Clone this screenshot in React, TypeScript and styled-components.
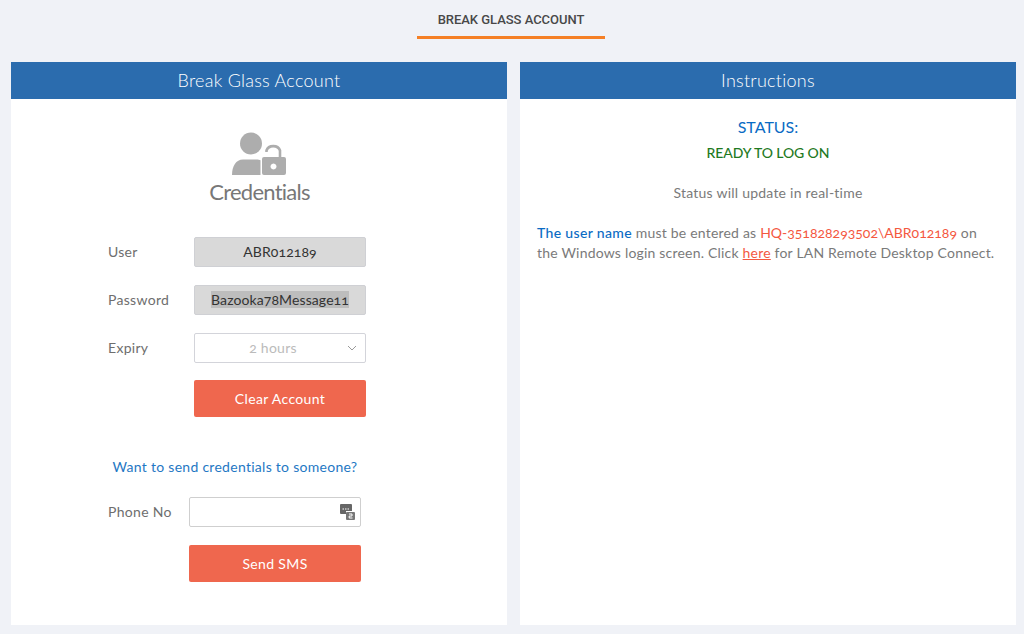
import React from "react";
import styled, { createGlobalStyle } from "styled-components";

const Global = createGlobalStyle`
  html, body { margin: 0; padding: 0; background: #f0f2f7; }
  body { font-family: "Lato", "Open Sans", sans-serif; color: #666; font-variant-numeric: oldstyle-nums; }
  * { box-sizing: border-box; }
`;

const Page = styled.div`
  width: 1024px;
  height: 634px;
  overflow: hidden;
  display: flex;
  flex-direction: column;
  background: #f0f2f7;
`;

const TabBar = styled.div`
  height: 62px;
  display: flex;
  justify-content: center;
  align-items: flex-start;
  padding-right: 2px;
`;

const Tab = styled.div`
  width: 188px;
  height: 39px;
  border-bottom: 3px solid #f58026;
  text-align: center;
  font: 500 13px/16px "Roboto", sans-serif;
  letter-spacing: -0.03px;
  padding-top: 12px;
  color: #484848;
`;

const Columns = styled.div`
  display: flex;
  gap: 13px;
  padding: 0 8px 9px 11px;
  flex: 1;
`;

const Panel = styled.section`
  width: 496px;
  background: #fff;
  display: flex;
  flex-direction: column;
`;

const PanelHead = styled.h2`
  margin: 0;
  height: 37px;
  background: #2b6cae;
  color: #fff;
  font: 300 18px/37px "Lato", sans-serif;
  text-align: center;
  letter-spacing: 0.25px;
`;

const CredBody = styled.div`
  display: flex;
  flex-direction: column;
  padding: 33px 0 0 97px;
`;

const Logo = styled.div`
  width: 303px;
  display: flex;
  flex-direction: column;
  align-items: center;
  margin-bottom: 33px;
`;

const LogoCaption = styled.div`
  font: 400 22px/24px "Lato", sans-serif;
  letter-spacing: -0.75px;
  color: #777;
  margin-top: 3px;
`;

const Row = styled.div<{ $gap?: number }>`
  display: flex;
  align-items: center;
  height: 30px;
  margin-bottom: ${(p) => p.$gap ?? 18}px;
`;

const Label = styled.label<{ $w?: number }>`
  width: ${(p) => p.$w ?? 86}px;
  flex: none;
  font-size: 14px;
  letter-spacing: 0.3px;
  padding-bottom: 2px;
  color: #6e6e6e;
`;

const ReadOnly = styled.div`
  width: 172px;
  height: 30px;
  background: #d9d9d9;
  border: 1px solid #cfd0d4;
  border-radius: 2px;
  font-size: 14px;
  line-height: 27px;
  letter-spacing: 0.1px;
  text-align: center;
  color: #333;
`;

const Selected = styled.span`
  background: #bdbdbd;
`;

const Select = styled.div`
  position: relative;
  width: 172px;
  height: 30px;
  background: #fff;
  border: 1px solid #d3d4da;
  border-radius: 2px;
  font-size: 14px;
  line-height: 27px;
  letter-spacing: 0.25px;
  text-align: center;
  color: #bbb;
  padding-right: 14px;
`;

const Chevron = styled.svg`
  position: absolute;
  right: 8px;
  top: 11px;
`;

const Button = styled.button<{ $ml: number }>`
  display: block;
  width: 172px;
  height: 37px;
  margin-left: ${(p) => p.$ml}px;
  background: #ef674e;
  border: 0;
  border-radius: 2px;
  color: #fff;
  font: 400 14px "Lato", sans-serif;
  letter-spacing: 0.35px;
`;

const Prompt = styled.div`
  width: 254px;
  text-align: center;
  font-size: 14px;
  line-height: 18px;
  letter-spacing: 0.28px;
  color: #1f78c4;
  margin: 41px 0 21px;
`;

const PhoneBox = styled.div`
  position: relative;
  width: 172px;
  height: 30px;
  background: #fff;
  border: 1px solid #cfcfcf;
  border-radius: 2px;
`;

const PhoneIcon = styled.svg`
  position: absolute;
  right: 4px;
  top: 6px;
`;

const InfoBody = styled.div`
  padding: 18px 17px 0;
  font-size: 14px;
`;

const StatusTitle = styled.div`
  text-align: center;
  font-size: 16px;
  line-height: 20px;
  color: #0a6bc4;
`;

const StatusValue = styled.div`
  text-align: center;
  font-size: 14px;
  line-height: 18px;
  font-weight: 500;
  letter-spacing: -0.1px;
  color: #1f7a1f;
  margin-top: 7px;
`;

const StatusNote = styled.div`
  text-align: center;
  line-height: 18px;
  letter-spacing: 0.23px;
  color: #7a7a7a;
  margin-top: 22px;
`;

const Para = styled.p`
  margin: 21px 0 0;
  line-height: 20px;
  letter-spacing: 0.2px;
  color: #7a7a7a;
  white-space: nowrap;
`;

const Blue = styled.span`
  color: #0a6bc4;
  font-weight: 500;
  letter-spacing: 0.35px;
`;

const Red = styled.span`
  color: #f4583f;
  letter-spacing: 0;
`;

const Here = styled.a`
  color: #f4583f;
  text-decoration: underline;
`;

export default function App() {
  return (
    <Page>
      <Global />
      <TabBar>
        <Tab>BREAK GLASS ACCOUNT</Tab>
      </TabBar>
      <Columns>
        <Panel>
          <PanelHead>Break Glass Account</PanelHead>
          <CredBody>
            <Logo>
              <svg width="56" height="45" viewBox="0 0 56 45" fill="#adadad">
                <circle cx="19" cy="11.500" r="11" />
                <path d="M0 43c0-9 4-15.500 11-15.500h13c2.500 0 3.500 .3 4.500 .8V43z" />
                <path fillRule="evenodd" d="M30 27a2 2 0 0 1 2-2h20a2 2 0 0 1 2 2v14a2 2 0 0 1-2 2H32a2 2 0 0 1-2-2zM41.500 31.500a3 3 0 1 0 .01 0z" />
                <path d="M34.500 20v-1.500a7 6 0 0 1 13.500 0V25" fill="none" stroke="#adadad" strokeWidth="2.600" />
              </svg>
              <LogoCaption>Credentials</LogoCaption>
            </Logo>
            <Row>
              <Label>User</Label>
              <ReadOnly>ABR012189</ReadOnly>
            </Row>
            <Row>
              <Label>Password</Label>
              <ReadOnly>
                <Selected>Bazooka78Message11</Selected>
              </ReadOnly>
            </Row>
            <Row $gap={17}>
              <Label>Expiry</Label>
              <Select>
                2 hours
                <Chevron width="10" height="7" viewBox="0 0 10 7" fill="none" stroke="#9a9a9a" strokeWidth="1">
                  <path d="M1 1l4 4 4-4" />
                </Chevron>
              </Select>
            </Row>
            <Button $ml={86}>Clear Account</Button>
            <Prompt>Want to send credentials to someone?</Prompt>
            <Row $gap={18}>
              <Label $w={81}>Phone No</Label>
              <PhoneBox>
                <PhoneIcon width="16" height="16" viewBox="0 0 16 16">
                  <path d="M1 0h10a1 1 0 0 1 1 1v6H6v3H1a1 1 0 0 1-1-1V1a1 1 0 0 1 1-1z" fill="#666" />
                  <path d="M2.500 5h1.500M5 5h1.500M7.500 5h1.500" stroke="#fff" strokeWidth="1.200" />
                  <rect x="6" y="8" width="9" height="8" rx="1" fill="#777" />
                  <path d="M9 10h3v2H9.200v2H12.500" fill="none" stroke="#fff" strokeWidth="1" />
                </PhoneIcon>
              </PhoneBox>
            </Row>
            <Button $ml={81}>Send SMS</Button>
          </CredBody>
        </Panel>
        <Panel>
          <PanelHead>Instructions</PanelHead>
          <InfoBody>
            <StatusTitle>STATUS:</StatusTitle>
            <StatusValue>READY TO LOG ON</StatusValue>
            <StatusNote>Status will update in real-time</StatusNote>
            <Para>
              <Blue>The user name</Blue> must be entered as <Red>HQ-351828293502\ABR012189</Red> on
              <br />
              the Windows login screen. Click <Here>here</Here> for LAN Remote Desktop Connect.
            </Para>
          </InfoBody>
        </Panel>
      </Columns>
    </Page>
  );
}
